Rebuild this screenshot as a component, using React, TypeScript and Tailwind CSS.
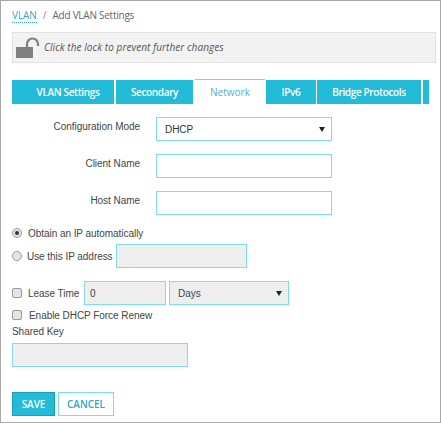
const sans = "font-['Open_Sans',sans-serif]";
const arial = "font-['Liberation_Sans',Arial,sans-serif]";

function Tab({ label, active, className }: { label: string; active?: boolean; className: string }) {
  if (active) {
    return (
      <div className={`flex h-[25px] items-center justify-center border-t border-[#7fd3e6] bg-white tracking-normal text-[#4fb3cc] ${className}`}>
        {label}
      </div>
    );
  }
  return (
    <div className={`mt-px flex h-[24px] items-center justify-center bg-[#22bbd8] font-semibold text-white ${className}`}>
      {label}
    </div>
  );
}

function LockIcon() {
  return (
    <svg width="25" height="22" viewBox="0 0 25 22" className="shrink-0">
      <rect x="0" y="10" width="17" height="11" fill="#808080" />
      <path d="M11 10V7a5.5 5.5 0 0 1 11 0v2" fill="none" stroke="#808080" strokeWidth="2.2" />
    </svg>
  );
}

function FormRow({ label, children }: { label: string; children: React.ReactNode }) {
  return (
    <div className="flex">
      <div className="w-[128px] pt-[2px] text-right leading-[16px]">{label}</div>
      <div className="ml-[16px]">{children}</div>
    </div>
  );
}

function Caret() {
  return <span className="h-0 w-0 border-x-[3px] border-t-[5px] border-x-transparent border-t-[#222]" />;
}

function Radio({ checked }: { checked?: boolean }) {
  return (
    <span className="flex h-[10px] w-[10px] shrink-0 items-center justify-center rounded-full border border-[#999] bg-[#e4e4e4]">
      {checked && <span className="h-[4px] w-[4px] rounded-full bg-[#333]" />}
    </span>
  );
}

function Check() {
  return <span className="h-[10px] w-[10px] shrink-0 rounded-[2px] border border-[#999] bg-[#e4e4e4]" />;
}

export default function App() {
  const inputBox = "h-[24px] border border-[#7fdcec]";
  return (
    <div className={`h-[423px] w-[441px] overflow-hidden border border-[#aaaaaa] bg-white pl-[11px] pr-[4px] text-[#444] ${arial} text-[10px] tracking-[-0.05px]`}>
      <div className={`flex h-[31px] items-end pb-[9px] text-[10px] ${sans}`}>
        <span className="border-b border-dotted border-[#2aa9c9] leading-[13px] text-[#3aa6c4]">VLAN</span>
        <span className="mx-[6px] text-[#888]">/</span>
        <span className="tracking-[-0.25px] text-[#666]">Add VLAN Settings</span>
      </div>

      <div className={`flex h-[31px] items-center border border-[#e2e2e2] bg-[#f2f2f2] pl-[3px] text-[10px] italic tracking-[0.07px] text-[#555] ${sans}`}>
        <LockIcon />
        <span className="ml-[3px]">Click the lock to prevent further changes</span>
      </div>

      <div className={`mt-[16px] flex gap-[1px] text-[10px] tracking-[-0.35px] ${sans}`}>
        <Tab label="VLAN Settings" className="w-[102px] pl-[10px]" />
        <Tab label="Secondary" className="ml-[1px] w-[77px]" />
        <Tab label="Network" active className="ml-[1px] w-[70px]" />
        <Tab label="IPv6" className="w-[50px]" />
        <Tab label="Bridge Protocols" className="w-[104px]" />
        <Tab label="" className="ml-[1px] w-[6px]" />
      </div>

      <div className="mt-[13px] flex flex-col gap-[13px]">
        <FormRow label="Configuration Mode">
          <div className={`${inputBox} flex w-[176px] items-center justify-between pl-[8px] pr-[6px] text-[#333]`}>
            DHCP
            <Caret />
          </div>
        </FormRow>
        <FormRow label="Client Name">
          <div className={`${inputBox} w-[176px]`} />
        </FormRow>
        <FormRow label="Host Name">
          <div className={`${inputBox} w-[176px]`} />
        </FormRow>
      </div>

      <div className="mt-[11px] flex h-[14px] items-center">
        <Radio checked />
        <span className="ml-[6px]">Obtain an IP automatically</span>
      </div>
      <div className="mt-[4px] flex items-center">
        <Radio />
        <span className="ml-[5px] w-[84px] whitespace-nowrap">Use this IP address</span>
        <div className={`${inputBox} ml-[5px] w-[131px] bg-[#eeeeee]`} />
      </div>

      <div className="mt-[13px] flex items-center">
        <Check />
        <span className="ml-[6px] w-[50px] whitespace-nowrap">Lease Time</span>
        <div className={`${inputBox} ml-[6px] flex w-[82px] items-center bg-[#eeeeee] pl-[5px]`}>0</div>
        <div className={`${inputBox} ml-[3px] flex w-[120px] items-center justify-between bg-[#eeeeee] pl-[8px] pr-[6px]`}>
          Days
          <Caret />
        </div>
      </div>
      <div className="mt-[3px] flex h-[14px] items-center">
        <Check />
        <span className="ml-[7px]">Enable DHCP Force Renew</span>
      </div>
      <div className="mt-[3px] leading-[14px]">Shared Key</div>
      <div className={`${inputBox} mt-[4px] w-[176px] bg-[#eeeeee]`} />

      <div className={`mt-[25px] flex gap-[3px] text-[10px] font-semibold ${sans}`}>
        <button className="h-[24px] w-[43px] border border-[#1a9fbb] bg-[#22bbd8] text-white">SAVE</button>
        <button className="h-[24px] w-[56px] border border-[#7fdcec] bg-white text-[#2aa9c9]">CANCEL</button>
      </div>
    </div>
  );
}
